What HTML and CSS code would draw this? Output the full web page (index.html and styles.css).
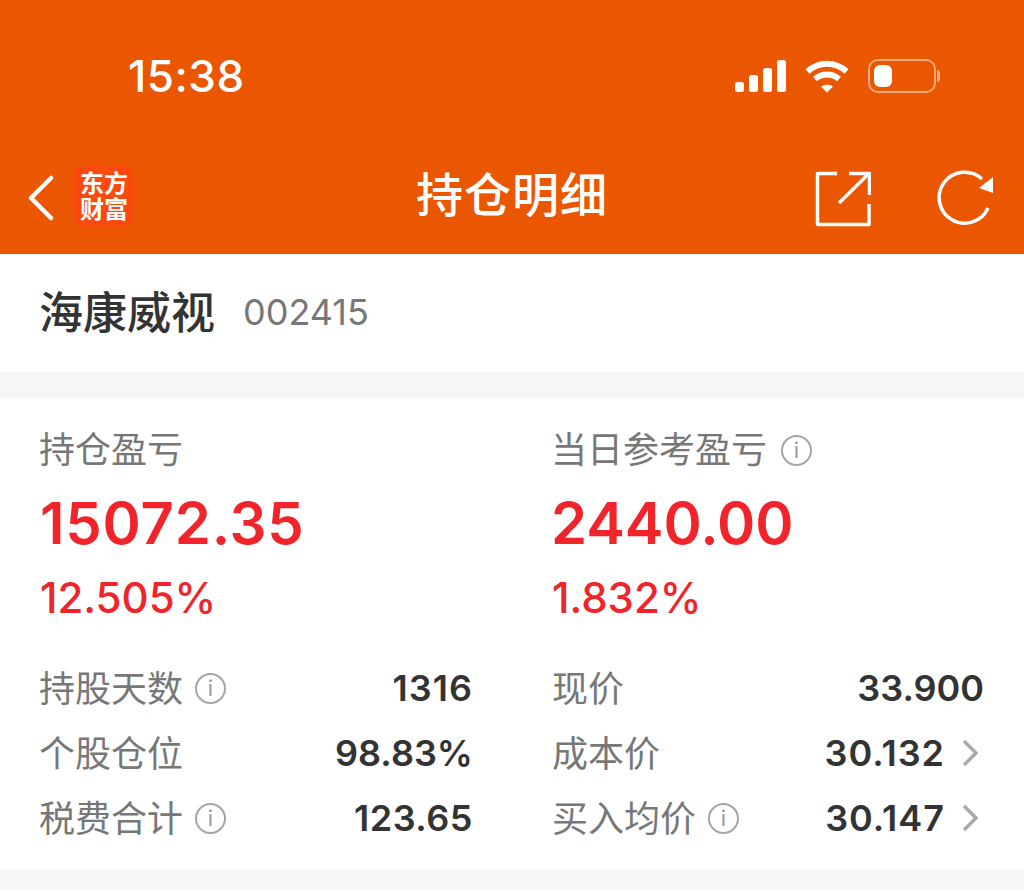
FILE: index.html
```html
<!DOCTYPE html>
<html lang="zh-CN">
<head>
  <meta charset="UTF-8" />
  <meta name="viewport" content="width=device-width, initial-scale=1.0"/>
  <title>持仓明细</title>
  <link rel="stylesheet" href="styles.css">
</head>
<body>
  <div class="header">
    <!-- Status bar -->
    <div class="status-bar">
      <span class="time">15:38</span>
      <div class="status-icons">
        <svg class="signal" width="52" height="32" viewBox="0 0 52 32" fill="#fff">
          <rect x="0" y="22" width="9" height="10" rx="2.5"/>
          <rect x="14" y="15" width="9" height="17" rx="2.5"/>
          <rect x="28" y="8" width="9" height="24" rx="2.5"/>
          <rect x="42" y="0" width="9" height="32" rx="2.5"/>
        </svg>
        <svg class="wifi" width="44" height="34" viewBox="0 0 44 34" fill="none" stroke="#fff" stroke-width="6">
          <path d="M2.500 12.500C13.500 2 30.500 2 41.500 12.500"/>
          <path d="M10 20C17 14 27 14 34 20"/>
          <path d="M16 27.500C19.500 25 24.500 25 28 27.500L22 33.500Z" fill="#fff" stroke="none"/>
        </svg>
        <div class="battery">
          <div class="battery-body"><div class="battery-level"></div></div>
          <div class="battery-tip"></div>
        </div>
      </div>
    </div>

    <!-- Nav bar -->
    <div class="nav-bar">
      <div class="nav-left">
        <svg width="28" height="46" viewBox="0 0 28 46" fill="none" stroke="#fff" stroke-width="4.500" stroke-linecap="round" stroke-linejoin="round">
          <path d="M24 3L4 23L24 43"/>
        </svg>
        <div class="logo">东方<br>财富</div>
      </div>
      <h1>持仓明细</h1>
      <div class="nav-right">
        <svg class="share" width="56" height="56" viewBox="0 0 56 56" fill="none" stroke="#fff" stroke-width="3.500" stroke-linejoin="round">
          <path d="M22 2.500H2.500V53.500H54V33"/>
          <path d="M24 32L54 2.500"/>
          <path d="M34 2.500H54.500V24"/>
        </svg>
        <svg width="58" height="58" viewBox="0 0 58 58" fill="none">
          <path d="M51 39A25.500 25.500 0 1 1 45 10" stroke="#fff" stroke-width="3.500"/>
          <path d="M56 8V24L42 19Z" fill="#fff"/>
        </svg>
      </div>
    </div>
  </div>

  <div class="stock-name">
    <strong>海康威视</strong>
    <span>002415</span>
  </div>

  <div class="gap"></div>

  <div class="details">
    <div class="summary">
      <div class="summary-col">
        <div class="summary-label">持仓盈亏</div>
        <div class="summary-value wide">15072.35</div>
        <div class="summary-rate">12.505%</div>
      </div>
      <div class="summary-col">
        <div class="summary-label">当日参考盈亏 <span class="info">i</span></div>
        <div class="summary-value">2440.00</div>
        <div class="summary-rate">1.832%</div>
      </div>
    </div>

    <div class="rows">
      <div class="row">
        <div class="label">持股天数 <span class="info">i</span></div>
        <div class="value wide">1316</div>
      </div>
      <div class="row">
        <div class="label">现价</div>
        <div class="value">33.900</div>
      </div>
      <div class="row">
        <div class="label">个股仓位</div>
        <div class="value">98.83%</div>
      </div>
      <div class="row">
        <div class="label">成本价</div>
        <div class="value wide">30.132
          <svg class="arrow" width="16" height="28" viewBox="0 0 16 28" fill="none" stroke="#aaa" stroke-width="3.500">
            <path d="M2 2L14 14L2 26"/>
          </svg>
        </div>
      </div>
      <div class="row">
        <div class="label">税费合计 <span class="info">i</span></div>
        <div class="value slight">123.65</div>
      </div>
      <div class="row">
        <div class="label">买入均价 <span class="info">i</span></div>
        <div class="value wide">30.147
          <svg class="arrow" width="16" height="28" viewBox="0 0 16 28" fill="none" stroke="#aaa" stroke-width="3.500">
            <path d="M2 2L14 14L2 26"/>
          </svg>
        </div>
      </div>
    </div>
  </div>

  <div class="gap bottom"></div>
</body>
</html>
```

FILE: styles.css
```css
* {
  margin: 0;
  padding: 0;
  box-sizing: border-box;
}

html, body {
  height: 100%;
  width: 100%;
  overflow: hidden;
  background: #fff;
  font-family: Inter, 'Noto Sans CJK SC', sans-serif;
}

.header {
  height: 254px;
  background-color: #eb5600;
  color: white;
}

.status-bar {
  height: 152px;
  padding: 0 84px 0 128px;
  display: flex;
  align-items: center;
  justify-content: space-between;
}

.time {
  font-size: 44px;
  font-weight: 500;
  letter-spacing: 0.5px;
}

.status-icons {
  display: flex;
  align-items: center;
  gap: 19px;
}

.wifi {
  margin-left: -1px;
}

.battery {
  display: flex;
  align-items: center;
  gap: 1px;
}

.battery-body {
  width: 68px;
  height: 34px;
  border: 2.500px solid rgba(255, 255, 255, 0.5);
  border-radius: 10px;
  padding: 4px;
}

.battery-level {
  width: 18px;
  height: 100%;
  background: white;
  border-radius: 6px;
}

.battery-tip {
  width: 3px;
  height: 12px;
  background: rgba(255, 255, 255, 0.5);
  border-radius: 0 3px 3px 0;
}

.nav-bar {
  height: 102px;
  padding: 0 29px 10px 27px;
  display: flex;
  align-items: center;
  justify-content: space-between;
  position: relative;
}

.nav-bar h1 {
  font-size: 47px;
  font-weight: 500;
  letter-spacing: 1px;
  position: absolute;
  left: 0;
  right: 0;
  bottom: 29px;
  line-height: 60px;
  text-align: center;
}

.nav-left, .nav-right {
  display: flex;
  align-items: center;
}

.nav-left {
  gap: 19px;
}

.nav-right {
  gap: 66px;
}

.share {
  margin-top: 2px;
}

.logo {
  width: 60px;
  height: 60px;
  margin-top: -4px;
  background: #fa4a10;
  border-radius: 9px;
  font-size: 24px;
  font-weight: 700;
  line-height: 26px;
  text-align: center;
  padding-top: 5px;
}

.stock-name {
  height: 118px;
  padding: 0 40px 6px 39px;
  display: flex;
  align-items: center;
  gap: 28px;
}

.stock-name strong {
  font-size: 44px;
  font-weight: 500;
  color: #333;
}

.stock-name span {
  font-size: 36px;
  color: #777;
  margin-top: 4px;
}

.gap {
  height: 26px;
  background-color: #f5f6f8;
}

.gap.bottom {
  height: 21px;
}

.details {
  height: 471px;
  padding: 0 40px;
}

.summary {
  display: grid;
  grid-template-columns: 432px 432px;
  column-gap: 80px;
  padding-top: 26px;
  margin-left: -1px;
}

.summary-label {
  font-size: 36px;
  line-height: 52px;
  color: #777;
  display: flex;
  align-items: center;
  gap: 14px;
}

.summary-value {
  font-size: 58px;
  font-weight: 600;
  line-height: 72px;
  margin-top: 11px;
  color: #f0242a;
}

.summary-value.wide {
  letter-spacing: 0.8px;
  margin-left: 1px;
}

.summary-rate {
  font-size: 42px;
  font-weight: 500;
  line-height: 52px;
  margin: 13px 0 0 1px;
  color: #f0242a;
}

.rows {
  display: grid;
  grid-template-columns: 434px 432px;
  column-gap: 79px;
  grid-auto-rows: 65px;
  margin-top: 31px;
  margin-left: -1px;
}

.row {
  display: flex;
  align-items: center;
  justify-content: space-between;
}

.label {
  font-size: 36px;
  color: #777;
  display: flex;
  align-items: center;
  gap: 12px;
  padding-bottom: 4px;
}

.value {
  font-size: 36px;
  font-weight: 600;
  color: #333;
  display: flex;
  align-items: center;
  gap: 17px;
}

.value.wide {
  letter-spacing: 1px;
}

.value.slight {
  letter-spacing: 0.5px;
}

.info {
  width: 31px;
  height: 31px;
  border: 2.500px solid #a5a5a5;
  border-radius: 50%;
  color: #999;
  font-size: 22px;
  font-weight: 400;
  line-height: 26px;
  text-align: center;
}

.label .info {
  margin-top: 5px;
}

.arrow {
  margin-right: 6px;
}
```
